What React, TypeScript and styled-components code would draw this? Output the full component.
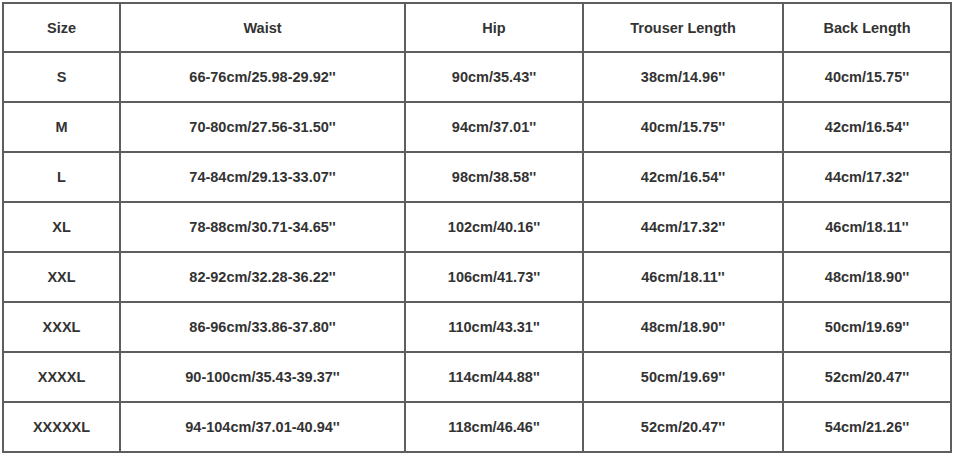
import React from "react";
import styled, { createGlobalStyle } from "styled-components";

const GlobalStyle = createGlobalStyle`
  html, body {
    margin: 0;
    padding: 0;
    background: #ffffff;
  }
  body {
    font-family: "Liberation Sans", Arial, sans-serif;
  }
`;

const Page = styled.div`
  width: 954px;
  height: 457px;
  padding: 2px 0 0 2px;
  box-sizing: border-box;
  background: #fff;
`;

const Table = styled.table`
  border-collapse: collapse;
  table-layout: fixed;
  width: 950px;
  color: #333;
  font-size: 14.5px;
  font-weight: bold;
`;

const Cell = styled.td`
  border: 2px solid #5e5e5e;
  height: 48px;
  padding: 0;
  text-align: center;
  vertical-align: middle;
`;

const HeadCell = styled(Cell).attrs({ as: "th" })`
  height: 47px;
  font-weight: bold;
  color: #333;
`;

const columns = [
  { label: "Size", width: 117 },
  { label: "Waist", width: 285 },
  { label: "Hip", width: 178 },
  { label: "Trouser Length", width: 200 },
  { label: "Back Length", width: 168 },
];

const rows = [
  ["S", "66-76cm/25.98-29.92''", "90cm/35.43''", "38cm/14.96''", "40cm/15.75''"],
  ["M", "70-80cm/27.56-31.50''", "94cm/37.01''", "40cm/15.75''", "42cm/16.54''"],
  ["L", "74-84cm/29.13-33.07''", "98cm/38.58''", "42cm/16.54''", "44cm/17.32''"],
  ["XL", "78-88cm/30.71-34.65''", "102cm/40.16''", "44cm/17.32''", "46cm/18.11''"],
  ["XXL", "82-92cm/32.28-36.22''", "106cm/41.73''", "46cm/18.11''", "48cm/18.90''"],
  ["XXXL", "86-96cm/33.86-37.80''", "110cm/43.31''", "48cm/18.90''", "50cm/19.69''"],
  ["XXXXL", "90-100cm/35.43-39.37''", "114cm/44.88''", "50cm/19.69''", "52cm/20.47''"],
  ["XXXXXL", "94-104cm/37.01-40.94''", "118cm/46.46''", "52cm/20.47''", "54cm/21.26''"],
];

export default function App() {
  return (
    <>
      <GlobalStyle />
      <Page>
        <Table>
          <colgroup>
            {columns.map((c) => (
              <col key={c.label} style={{ width: c.width }} />
            ))}
          </colgroup>
          <thead>
            <tr>
              {columns.map((c) => (
                <HeadCell key={c.label}>{c.label}</HeadCell>
              ))}
            </tr>
          </thead>
          <tbody>
            {rows.map((r) => (
              <tr key={r[0]}>
                {r.map((v, i) => (
                  <Cell key={i}>{v}</Cell>
                ))}
              </tr>
            ))}
          </tbody>
        </Table>
      </Page>
    </>
  );
}
